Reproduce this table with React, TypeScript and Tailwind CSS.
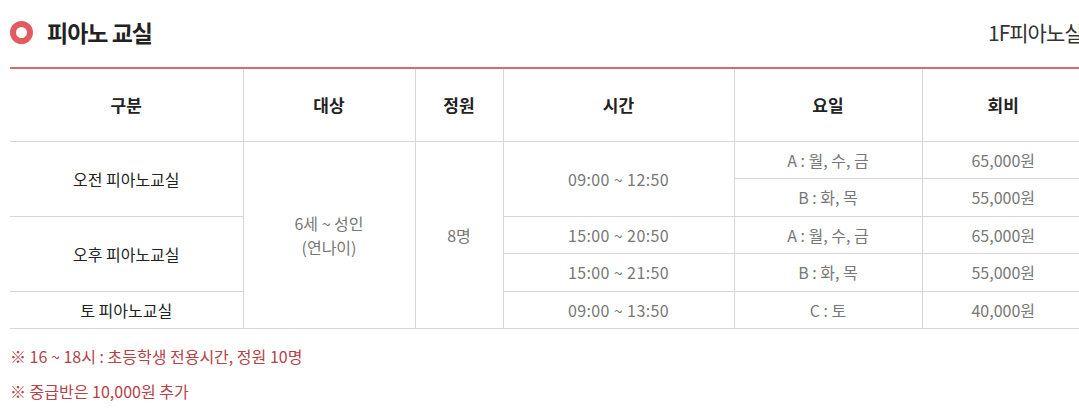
import React from "react";

const font = { fontFamily: '"Noto Sans CJK KR", "Noto Sans", sans-serif' };

const cell = "border border-[#d6d6d6] text-center align-middle";

export default function App() {
  return (
    <div className="w-[1079px] h-[419px] overflow-hidden bg-white" style={font}>
      <div className="w-[1100px] pl-[10px]">
        <div className="flex h-[67px] items-center justify-between pb-[2px]">
          <div className="flex items-center gap-[14px]">
            <span className="block h-[23px] w-[23px] rounded-full border-[6px] border-[#e25b5f] bg-white" />
            <h2 className="text-[23px] font-bold tracking-[-1px] text-[#222]">피아노 교실</h2>
          </div>
          <span className="w-[112px] text-[21px] tracking-[-1px] text-[#333]">1F피아노실</span>
        </div>
        <div className="h-[2px] w-[1090px] bg-[#d46a72]" />
        <table className="w-[1074px] table-fixed border-collapse text-[16px] text-[#777]">
          <colgroup>
            <col className="w-[233px]" />
            <col className="w-[172px]" />
            <col className="w-[88px]" />
            <col className="w-[231px]" />
            <col className="w-[188px]" />
            <col />
          </colgroup>
          <thead>
            <tr className="h-[72px] text-[17px] font-bold text-[#222]">
              <th className={`${cell} border-t-0 border-l-0`}>구분</th>
              <th className={`${cell} border-t-0`}>대상</th>
              <th className={`${cell} border-t-0`}>정원</th>
              <th className={`${cell} border-t-0`}>시간</th>
              <th className={`${cell} border-t-0`}>요일</th>
              <th className={`${cell} border-t-0 border-r-0`}>회비</th>
            </tr>
          </thead>
          <tbody>
            <tr className="h-[37px]">
              <td rowSpan={2} className={`${cell} border-l-0 text-[#222]`}>오전 피아노교실</td>
              <td rowSpan={5} className={cell}>
                6세 ~ 성인
                <br />
                (연나이)
              </td>
              <td rowSpan={5} className={cell}>8명</td>
              <td rowSpan={2} className={`${cell} tracking-[0.4px]`}>09:00 ~ 12:50</td>
              <td className={cell}>A : 월, 수, 금</td>
              <td className={`${cell} border-r-0`}>65,000원</td>
            </tr>
            <tr className="h-[38px]">
              <td className={cell}>B : 화, 목</td>
              <td className={`${cell} border-r-0`}>55,000원</td>
            </tr>
            <tr className="h-[37px]">
              <td rowSpan={2} className={`${cell} border-l-0 text-[#222]`}>오후 피아노교실</td>
              <td className={`${cell} tracking-[0.4px]`}>15:00 ~ 20:50</td>
              <td className={cell}>A : 월, 수, 금</td>
              <td className={`${cell} border-r-0`}>65,000원</td>
            </tr>
            <tr className="h-[38px]">
              <td className={`${cell} tracking-[0.4px]`}>15:00 ~ 21:50</td>
              <td className={cell}>B : 화, 목</td>
              <td className={`${cell} border-r-0`}>55,000원</td>
            </tr>
            <tr className="h-[37px]">
              <td className={`${cell} border-l-0 text-[#222]`}>토 피아노교실</td>
              <td className={`${cell} tracking-[0.4px]`}>09:00 ~ 13:50</td>
              <td className={cell}>C : 토</td>
              <td className={`${cell} border-r-0`}>40,000원</td>
            </tr>
          </tbody>
        </table>
        <div className="mt-[16px] flex flex-col gap-[13px] text-[16px] text-[#b3424a]">
          <p className="leading-[22px]">※ 16 ~ 18시 : 초등학생 전용시간, 정원 10명</p>
          <p className="leading-[22px]">※ 중급반은 10,000원 추가</p>
        </div>
      </div>
    </div>
  );
}
